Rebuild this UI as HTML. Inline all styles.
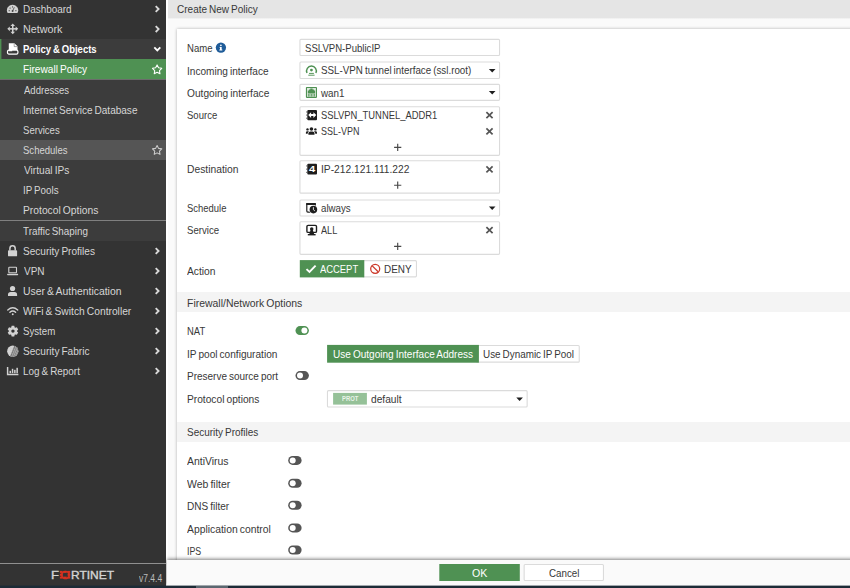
<!DOCTYPE html>
<html lang="en"><head><meta charset="utf-8"><title>Create New Policy</title>
<style>
html,body{margin:0;padding:0}
body{width:850px;height:588px;overflow:hidden;position:relative;background:#fafafa;font-family:"Liberation Sans",sans-serif;font-size:10.6px;color:#333}
.b{position:absolute;box-sizing:border-box}
.t{position:absolute;white-space:nowrap;line-height:1;transform-origin:0 0;display:block;word-spacing:-0.8px}
svg{position:absolute;overflow:visible}

</style></head>
<body>
<!-- main area -->
<div class="b" style="left:166px;top:0;width:2px;height:586px;background:#fff"></div>
<div class="b" style="left:168px;top:0;width:682px;height:19px;background:linear-gradient(#e5e5e5 0,#e5e5e5 18px,#efefef 18px,#f4f4f4 19px)"></div>
<div class="b" style="left:176.5px;top:29px;width:680px;height:540px;background:#fff;box-shadow:0 0 3px rgba(0,0,0,.3)"></div>
<div class="b" style="left:177px;top:292px;width:673px;height:20px;background:#f4f4f4"></div>
<div class="b" style="left:177px;top:422px;width:673px;height:20px;background:#f4f4f4"></div>
<svg width="850" height="588" viewBox="0 0 850 588" style="left:0;top:0">
<rect x="299.95" y="39.35" width="199.60" height="16.20" rx="1" fill="#fff" stroke="#dbdbdb" stroke-width="1.1"/>
<rect x="299.95" y="62.05" width="199.60" height="16.40" rx="1" fill="#fff" stroke="#dbdbdb" stroke-width="1.1"/>
<rect x="299.95" y="84.35" width="199.60" height="16.00" rx="1" fill="#fff" stroke="#dbdbdb" stroke-width="1.1"/>
<rect x="299.95" y="106.75" width="199.60" height="48.60" rx="1" fill="#fff" stroke="#dbdbdb" stroke-width="1.1"/>
<rect x="299.95" y="160.75" width="199.60" height="32.40" rx="1" fill="#fff" stroke="#dbdbdb" stroke-width="1.1"/>
<rect x="299.95" y="199.95" width="199.60" height="16.00" rx="1" fill="#fff" stroke="#dbdbdb" stroke-width="1.1"/>
<rect x="299.95" y="221.75" width="199.60" height="32.60" rx="1" fill="#fff" stroke="#dbdbdb" stroke-width="1.1"/>
<rect x="327.45" y="390.65" width="199.70" height="16.30" rx="1" fill="#fff" stroke="#dbdbdb" stroke-width="1.1"/>
<rect x="362.55" y="260.65" width="53.90" height="16.20" rx="1" fill="#fff" stroke="#dbdbdb" stroke-width="1.1"/>
<rect x="299.80" y="260.10" width="64.50" height="17.30" fill="#4f9153"/>
<rect x="476.55" y="345.45" width="102.70" height="16.70" rx="1" fill="#fff" stroke="#dbdbdb" stroke-width="1.1"/>
<rect x="327.10" y="344.90" width="151.80" height="17.80" fill="#4f9153"/>
<rect x="333.10" y="392.90" width="33.80" height="11.70" fill="#95c198"/>
</svg>
<!-- footer -->
<div class="b" style="left:167px;top:560px;width:690px;height:26px;background:#fafafa;box-shadow:0 -1px 3.5px rgba(0,0,0,.5)"></div>
<svg width="850" height="588" viewBox="0 0 850 588" style="left:0;top:0">
<rect x="439.30" y="564.00" width="80.50" height="17.00" fill="#4f9153"/>
<rect x="524.15" y="564.45" width="79.30" height="16.10" rx="1" fill="#fff" stroke="#dbdbdb" stroke-width="1.1"/>
</svg>
<!-- sidebar -->
<div class="b" style="left:0;top:0;width:166px;height:586px;background:#333"></div>
<div class="b" style="left:0;top:39px;width:166px;height:202px;background:#3c3c3c"></div>
<div class="b" style="left:0;top:39px;width:2px;height:20px;background:linear-gradient(90deg,#4f9153 0,#4f9153 1px,#445e45 1px)"></div>
<div class="b" style="left:0;top:59px;width:166px;height:20px;background:#4f9153"></div>
<div class="b" style="left:0;top:79px;width:166px;height:1px;background:#6c6c6c"></div>
<div class="b" style="left:0;top:140px;width:166px;height:20px;background:#555"></div>
<div class="b" style="left:0;top:220px;width:166px;height:1px;background:#808080"></div>
<div class="b" style="left:0;top:563px;width:166px;height:1px;background:#909090"></div>
<!-- taskbar strip -->
<div class="b" style="left:0;top:586px;width:850px;height:2px;background:#1c2b36"></div>
<div class="b" style="left:0;top:585px;width:850px;height:1px;background:#1c2b36;opacity:.4"></div>
<div class="b" style="left:196px;top:586px;width:32px;height:2px;background:#5b6770"></div>
<svg width="850" height="588" viewBox="0 0 850 588" style="left:0;top:0">
<path d="M7.65 13.1A5.65 5.65 0 1 1 17.45 13.1Z" fill="#d2d2d2"/>
<g fill="#444"><circle cx="9.2" cy="10.7" r=".6"/><circle cx="10.1" cy="8.1" r=".6"/><circle cx="12.55" cy="6.9" r=".6"/><circle cx="15.9" cy="10.7" r=".6"/><circle cx="12.6" cy="11" r=".95"/><path d="M12.6 11l1.7-3.7" stroke="#444" stroke-width=".8"/></g>
<g fill="#d2d2d2"><path d="M12.75 23.400000000000002l2.3 2.5h-4.6z"/><path d="M12.75 34.300000000000004l2.3-2.5h-4.6z"/><path d="M7.3 28.85l2.5-2.3v4.6z"/><path d="M18.2 28.85l-2.5-2.3v4.6z"/><rect x="12.0" y="25.450000000000003" width="1.5" height="6.8"/><rect x="9.35" y="28.1" width="6.8" height="1.5"/></g>
<rect x="7.5" y="50.2" width="10.4" height="3.9" rx="1.4" fill="#3c3c3c" stroke="#fff" stroke-width="1.2"/><path d="M8.8 43.2h5.6l3.1 3.1v3.6h-5.3v1.3H8.8z" fill="#fff"/><path d="M14.2 43.6v3h3" fill="none" stroke="#3c3c3c" stroke-width=".6" opacity=".75"/>
<rect x="8" y="250.2" width="9.1" height="6.1" rx=".9" fill="#d2d2d2"/><path d="M9.9 250.6v-2.2a2.65 2.65 0 0 1 5.3 0v2.2" fill="none" stroke="#d2d2d2" stroke-width="1.5"/>
<rect x="8.8" y="267.2" width="7.7" height="5.6" rx=".6" fill="none" stroke="#d2d2d2" stroke-width="1.1"/><rect x="7.1" y="273.7" width="11.1" height="1.5" rx=".7" fill="#d2d2d2"/>
<circle cx="12.55" cy="288.5" r="2.6" fill="#d2d2d2"/><path d="M8 296.1v-1.5a2.7 2.7 0 0 1 2.7-2.7h3.7a2.7 2.7 0 0 1 2.7 2.7v1.5z" fill="#d2d2d2"/>
<g fill="none" stroke="#d2d2d2" stroke-width="1.4" stroke-linecap="round"><path d="M7.8 310.1Q12.75 305.6 17.7 310.1"/><path d="M9.9 312.2Q12.75 309.7 15.6 312.2"/></g><circle cx="12.75" cy="314.2" r=".95" fill="#d2d2d2"/>
<path d="M11.65 325.81L14.25 325.81L14.70 327.39L15.29 327.73L16.89 327.33L18.18 329.58L17.04 330.76L17.04 331.44L18.18 332.62L16.89 334.87L15.29 334.47L14.70 334.81L14.25 336.39L11.65 336.39L11.20 334.81L10.61 334.47L9.01 334.87L7.72 332.62L8.86 331.44L8.86 330.76L7.72 329.58L9.01 327.33L10.61 327.73L11.20 327.39Z M11.25 331.1a1.7 1.7 0 1 0 3.4 0a1.7 1.7 0 1 0-3.4 0z" fill="#d2d2d2" fill-rule="evenodd"/>
<circle cx="12.75" cy="351.2" r="5.6" fill="#d2d2d2"/>
<clipPath id="sf"><circle cx="12.75" cy="351.2" r="5.6"/></clipPath><g clip-path="url(#sf)"><path d="M9.4 358L15 344H20V358z" fill="#777"/><path d="M11.2 358L16.8 344M13 358L18.6 344M14.8 358L20.4 344M16.6 358L22.2 344" stroke="#c4c4c4" stroke-width=".6" fill="none"/><path d="M10 350.2L20 354.2M10 352.6L20 356.6M10 347.8L20 351.8" stroke="#bdbdbd" stroke-width=".45" fill="none" opacity=".7"/></g>
<path d="M7.6 366.9v7.6h10.8" fill="none" stroke="#d2d2d2" stroke-width="1.45"/><g fill="#d2d2d2"><rect x="9.5" y="370.8" width="1.5" height="2.4"/><rect x="11.8" y="368.8" width="1.5" height="4.4"/><rect x="14.1" y="369.8" width="1.5" height="3.4"/><rect x="16.4" y="367.8" width="1.5" height="5.4"/></g>
<path d="M155.7 6.10l2.9 2.9-2.9 2.9" fill="none" stroke="#d8d8d8" stroke-width="1.85"/>
<path d="M155.7 26.20l2.9 2.9-2.9 2.9" fill="none" stroke="#d8d8d8" stroke-width="1.85"/>
<path d="M155.7 248.10l2.9 2.9-2.9 2.9" fill="none" stroke="#d8d8d8" stroke-width="1.85"/>
<path d="M155.7 268.10l2.9 2.9-2.9 2.9" fill="none" stroke="#d8d8d8" stroke-width="1.85"/>
<path d="M155.7 288.10l2.9 2.9-2.9 2.9" fill="none" stroke="#d8d8d8" stroke-width="1.85"/>
<path d="M155.7 308.10l2.9 2.9-2.9 2.9" fill="none" stroke="#d8d8d8" stroke-width="1.85"/>
<path d="M155.7 328.10l2.9 2.9-2.9 2.9" fill="none" stroke="#d8d8d8" stroke-width="1.85"/>
<path d="M155.7 348.10l2.9 2.9-2.9 2.9" fill="none" stroke="#d8d8d8" stroke-width="1.85"/>
<path d="M155.7 368.10l2.9 2.9-2.9 2.9" fill="none" stroke="#d8d8d8" stroke-width="1.85"/>
<path d="M154.3 47.4l3 3 3-3" fill="none" stroke="#fff" stroke-width="1.85"/>
<path d="M157.10 64.90L158.57 67.78L161.76 68.29L159.48 70.57L159.98 73.76L157.10 72.30L154.22 73.76L154.72 70.57L152.44 68.29L155.63 67.78Z" fill="none" stroke="#fff" stroke-width="1.05" stroke-linejoin="round"/>
<path d="M157.10 145.50L158.57 148.38L161.76 148.89L159.48 151.17L159.98 154.36L157.10 152.90L154.22 154.36L154.72 151.17L152.44 148.89L155.63 148.38Z" fill="none" stroke="#ccc" stroke-width="1.05" stroke-linejoin="round"/>
<g font-family="'Liberation Sans',sans-serif" font-weight="400" font-size="10.6" fill="#d4d4d4" stroke="#d4d4d4" stroke-width=".35"><text x="51.1" y="578.6" textLength="8" lengthAdjust="spacingAndGlyphs">F</text><text x="60.2" y="578.6" textLength="9.8" lengthAdjust="spacingAndGlyphs" fill="#d8311f" stroke="#d8311f">O</text><text x="71" y="578.6" textLength="43" lengthAdjust="spacingAndGlyphs">RTINET</text></g>
<g fill="#d8311f"><rect x="59.9" y="570.9" width="2.6" height="2"/><rect x="63.4" y="570.9" width="3.3" height="2"/><rect x="67.6" y="570.9" width="2.6" height="2"/><rect x="59.9" y="573.7" width="2.6" height="2.1"/><rect x="67.6" y="573.7" width="2.6" height="2.1"/><rect x="59.9" y="576.6" width="2.6" height="2"/><rect x="63.4" y="576.6" width="3.3" height="2"/><rect x="67.6" y="576.6" width="2.6" height="2"/></g>
<circle cx="220.9" cy="47.6" r="5.15" fill="#1f5c99"/><g fill="#fff"><circle cx="220.9" cy="45.3" r=".85"/><path d="M219.8 46.9h1.9v2.7h.6v.9h-3v-.9h.7v-1.8h-.7z"/></g>
<path d="M307.0 73.0A4.9 4.9 0 1 1 315.9 73.0" fill="none" stroke="#4f9153" stroke-width="1.45"/><circle cx="311.45" cy="70.1" r="1.4" fill="#4f9153"/><path d="M309 73.4h4.9M308.3 75.2h6.3" stroke="#4f9153" stroke-width=".95"/>
<rect x="305.9" y="86.9" width="11.1" height="11" rx=".8" fill="#4f9153"/><rect x="307" y="88" width="8.9" height="8.8" fill="#dfeadf"/><path d="M307.8 93.5v-3.1h1.2v-1h1.3v-.8h2.3v.8h1.3v1h1.2v3.1z" fill="#4f9153"/><path d="M308.4 94v2.6M309.9 94v2.6M311.45 94v2.6M313 94v2.6M314.5 94v2.6" stroke="#4f9153" stroke-width=".8"/>
<rect x="307.3" y="109.9" width="9.7" height="10.40" rx="1" fill="#1e1e1e"/>
<rect x="306.2" y="111.43" width="1.7" height="1.1" fill="#555"/>
<rect x="306.2" y="114.55" width="1.7" height="1.1" fill="#555"/>
<rect x="306.2" y="117.67" width="1.7" height="1.1" fill="#555"/>
<path d="M308.2 115.1l2.9-2.9v1.9h2.3v-1.9l2.9 2.9-2.9 2.9v-1.9h-2.3v1.9z" fill="#fff"/>
<g fill="#1e1e1e"><circle cx="311.45" cy="129" r="1.8"/><path d="M308.4 134.7v-1.2a2.1 2.1 0 0 1 2.1-2.1h1.9a2.1 2.1 0 0 1 2.1 2.1v1.2z"/><circle cx="307.5" cy="129.4" r="1.2"/><circle cx="315.4" cy="129.4" r="1.2"/><path d="M305.9 133.7v-1.1a1.4 1.4 0 0 1 1.4-1.4h.9a1.3 1.3 0 0 1 .7.2a3 3 0 0 0-1.3 2.3z"/><path d="M317 133.7v-1.1a1.4 1.4 0 0 0-1.4-1.4h-.9a1.3 1.3 0 0 0-.7.2a3 3 0 0 1 1.3 2.3z"/></g>
<rect x="307.3" y="163.8" width="9.7" height="10.70" rx="1" fill="#1e1e1e"/>
<rect x="306.2" y="165.39" width="1.7" height="1.1" fill="#555"/>
<rect x="306.2" y="168.60" width="1.7" height="1.1" fill="#555"/>
<rect x="306.2" y="171.81" width="1.7" height="1.1" fill="#555"/>
<text x="309.0" y="172.4" font-family="'Liberation Sans',sans-serif" font-weight="700" font-size="9.4" fill="#fff" textLength="6.2" lengthAdjust="spacingAndGlyphs">4</text>
<path d="M311 212.1h-3.2a1 1 0 0 1-1-1v-7.3h8.4v2" fill="none" stroke="#1e1e1e" stroke-width="1.2"/><rect x="306.2" y="202.9" width="9.6" height="2.1" rx=".6" fill="#1e1e1e"/><circle cx="313.4" cy="209.6" r="4.4" fill="#fff"/><circle cx="313.4" cy="209.6" r="3.8" fill="#1e1e1e"/><path d="M313.4 207.2v2.5l1.5 1.2" fill="none" stroke="#fff" stroke-width=".85"/>
<rect x="306.9" y="225.4" width="9.6" height="7" rx="1.2" fill="none" stroke="#1e1e1e" stroke-width="1.4"/><circle cx="311.7" cy="228.9" r="1.75" fill="#1e1e1e"/><path d="M310.7 229.8l-1.5 4.4h5l-1.5-4.4z" fill="#1e1e1e"/><path d="M307.8 234.7h7.8" stroke="#1e1e1e" stroke-width="1.4"/>
<path d="M488.9 69.0h6.6l-3.3 3.5z" fill="#1e1e1e"/>
<path d="M488.9 90.9h6.6l-3.3 3.5z" fill="#1e1e1e"/>
<path d="M488.9 206.6h6.6l-3.3 3.5z" fill="#1e1e1e"/>
<path d="M516.3000000000001 397.4h6.6l-3.3 3.5z" fill="#1e1e1e"/>
<path d="M486.4 112.2l6.2 6M492.6 112.2l-6.2 6" stroke="#555" stroke-width="1.7" fill="none"/>
<path d="M486.4 128.3l6.2 6M492.6 128.3l-6.2 6" stroke="#555" stroke-width="1.7" fill="none"/>
<path d="M486.4 166.4l6.2 6M492.6 166.4l-6.2 6" stroke="#555" stroke-width="1.7" fill="none"/>
<path d="M486.4 227.2l6.2 6M492.6 227.2l-6.2 6" stroke="#555" stroke-width="1.7" fill="none"/>
<path d="M394.1 147.3h7.2M397.7 143.70v7.2" stroke="#484848" stroke-width="1.15" fill="none"/>
<path d="M394.1 185.2h7.2M397.7 181.60v7.2" stroke="#484848" stroke-width="1.15" fill="none"/>
<path d="M394.1 246.4h7.2M397.7 242.80v7.2" stroke="#484848" stroke-width="1.15" fill="none"/>
<path d="M306.5 269.1l3 2.9 6.1-6.3" fill="none" stroke="#fff" stroke-width="1.9"/>
<circle cx="375.2" cy="268.8" r="4.5" fill="none" stroke="#cc3a2b" stroke-width="1.3"/><path d="M372 265.6l6.4 6.4" stroke="#cc3a2b" stroke-width="1.3"/>
<rect x="295.5" y="326.10" width="13.4" height="9.0" rx="4.5" fill="#4f9153"/>
<circle cx="304.40" cy="330.6" r="3" fill="#fff"/>
<rect x="295.5" y="371.10" width="13.4" height="9.0" rx="4.5" fill="#555"/>
<circle cx="300.00" cy="375.6" r="3" fill="#fff"/>
<rect x="288.2" y="455.90" width="13.4" height="9.0" rx="4.5" fill="#555"/>
<circle cx="292.70" cy="460.4" r="3" fill="#fff"/>
<rect x="288.2" y="478.70" width="13.4" height="9.0" rx="4.5" fill="#555"/>
<circle cx="292.70" cy="483.2" r="3" fill="#fff"/>
<rect x="288.2" y="500.80" width="13.4" height="9.0" rx="4.5" fill="#555"/>
<circle cx="292.70" cy="505.3" r="3" fill="#fff"/>
<rect x="288.2" y="523.40" width="13.4" height="9.0" rx="4.5" fill="#555"/>
<circle cx="292.70" cy="527.9" r="3" fill="#fff"/>
<rect x="288.2" y="545.50" width="13.4" height="9.0" rx="4.5" fill="#555"/>
<circle cx="292.70" cy="550.0" r="3" fill="#fff"/>
</svg>
<nav aria-label="Main menu">
<span class="t" style="left:23.30px;top:4.00px;font-size:10.6px;color:#d6d6d6;transform:scaleX(0.9386)">Dashboard</span>
<span class="t" style="left:23.30px;top:24.00px;font-size:10.6px;color:#d6d6d6;transform:scaleX(1.0132)">Network</span>
<span class="t" style="left:23.49px;top:44.00px;font-size:10.6px;color:#fff;transform:scaleX(0.8979);font-weight:700">Policy &amp; Objects</span>
<span class="t" style="left:23.29px;top:64.00px;font-size:10.6px;color:#fff;transform:scaleX(0.9570)">Firewall Policy</span>
<span class="t" style="left:23.52px;top:85.00px;font-size:10.6px;color:#d6d6d6;transform:scaleX(0.9000)">Addresses</span>
<span class="t" style="left:23.21px;top:105.00px;font-size:10.6px;color:#d6d6d6;transform:scaleX(0.9468)">Internet Service Database</span>
<span class="t" style="left:23.09px;top:125.00px;font-size:10.6px;color:#d6d6d6;transform:scaleX(0.9037)">Services</span>
<span class="t" style="left:23.09px;top:145.00px;font-size:10.6px;color:#d6d6d6;transform:scaleX(0.9007)">Schedules</span>
<span class="t" style="left:23.60px;top:165.00px;font-size:10.6px;color:#d6d6d6;transform:scaleX(0.9584)">Virtual IPs</span>
<span class="t" style="left:23.23px;top:185.00px;font-size:10.6px;color:#d6d6d6;transform:scaleX(0.9236)">IP Pools</span>
<span class="t" style="left:23.31px;top:205.00px;font-size:10.6px;color:#d6d6d6;transform:scaleX(0.9716)">Protocol Options</span>
<span class="t" style="left:23.05px;top:226.00px;font-size:10.6px;color:#d6d6d6;transform:scaleX(0.9296)">Traffic Shaping</span>
<span class="t" style="left:23.38px;top:246.00px;font-size:10.6px;color:#d6d6d6;transform:scaleX(0.9498)">Security Profiles</span>
<span class="t" style="left:23.86px;top:266.00px;font-size:10.6px;color:#d6d6d6;transform:scaleX(0.9438)">VPN</span>
<span class="t" style="left:23.33px;top:286.00px;font-size:10.6px;color:#d6d6d6;transform:scaleX(0.9819)">User &amp; Authentication</span>
<span class="t" style="left:23.11px;top:306.00px;font-size:10.6px;color:#d6d6d6;transform:scaleX(0.9686)">WiFi &amp; Switch Controller</span>
<span class="t" style="left:23.09px;top:326.00px;font-size:10.6px;color:#d6d6d6;transform:scaleX(0.9126)">System</span>
<span class="t" style="left:23.44px;top:346.00px;font-size:10.6px;color:#d6d6d6;transform:scaleX(0.9517)">Security Fabric</span>
<span class="t" style="left:23.28px;top:366.00px;font-size:10.6px;color:#d6d6d6;transform:scaleX(0.9355)">Log &amp; Report</span>
<span class="t" style="left:139.30px;top:573.00px;font-size:10.6px;color:#bbb;transform:scaleX(0.8009)">v7.4.4</span>
</nav>
<header>
<span class="t" style="left:176.69px;top:4.00px;font-size:10.6px;color:#383838;transform:scaleX(0.9448)">Create New Policy</span>
</header>
<main>
<span class="t" style="left:187.00px;top:43.00px;font-size:10.6px;color:#383838;transform:scaleX(0.9025)">Name</span>
<span class="t" style="left:186.76px;top:66.00px;font-size:10.6px;color:#383838;transform:scaleX(0.9518)">Incoming interface</span>
<span class="t" style="left:186.55px;top:88.00px;font-size:10.6px;color:#383838;transform:scaleX(0.9600)">Outgoing interface</span>
<span class="t" style="left:186.68px;top:110.00px;font-size:10.6px;color:#383838;transform:scaleX(0.8994)">Source</span>
<span class="t" style="left:186.78px;top:164.00px;font-size:10.6px;color:#383838;transform:scaleX(0.9714)">Destination</span>
<span class="t" style="left:186.68px;top:203.00px;font-size:10.6px;color:#383838;transform:scaleX(0.8917)">Schedule</span>
<span class="t" style="left:186.81px;top:225.00px;font-size:10.6px;color:#383838;transform:scaleX(0.9078)">Service</span>
<span class="t" style="left:187.15px;top:266.00px;font-size:10.6px;color:#383838;transform:scaleX(0.9693)">Action</span>
<span class="t" style="left:186.65px;top:298.00px;font-size:10.6px;color:#383838;transform:scaleX(0.9862)">Firewall/Network Options</span>
<span class="t" style="left:186.67px;top:326.00px;font-size:10.6px;color:#383838;transform:scaleX(0.8892)">NAT</span>
<span class="t" style="left:186.76px;top:349.00px;font-size:10.6px;color:#383838;transform:scaleX(0.9534)">IP pool configuration</span>
<span class="t" style="left:186.61px;top:371.00px;font-size:10.6px;color:#383838;transform:scaleX(0.9420)">Preserve source port</span>
<span class="t" style="left:186.55px;top:394.00px;font-size:10.6px;color:#383838;transform:scaleX(0.9625)">Protocol options</span>
<span class="t" style="left:186.62px;top:427.00px;font-size:10.6px;color:#383838;transform:scaleX(0.9413)">Security Profiles</span>
<span class="t" style="left:186.54px;top:456.00px;font-size:10.6px;color:#383838;transform:scaleX(0.9849)">AntiVirus</span>
<span class="t" style="left:186.73px;top:479.00px;font-size:10.6px;color:#383838;transform:scaleX(0.9873)">Web filter</span>
<span class="t" style="left:186.83px;top:501.00px;font-size:10.6px;color:#383838;transform:scaleX(0.9465)">DNS filter</span>
<span class="t" style="left:186.72px;top:524.00px;font-size:10.6px;color:#383838;transform:scaleX(0.9773)">Application control</span>
<span class="t" style="left:186.68px;top:546.00px;font-size:10.6px;color:#383838;transform:scaleX(0.8318)">IPS</span>
<span class="t" style="left:304.82px;top:43.00px;font-size:10.6px;color:#383838;transform:scaleX(0.9046)">SSLVPN-PublicIP</span>
<span class="t" style="left:320.88px;top:65.00px;font-size:10.6px;color:#383838;transform:scaleX(0.9252)">SSL-VPN tunnel interface (ssl.root)</span>
<span class="t" style="left:321.08px;top:88.00px;font-size:10.6px;color:#383838;transform:scaleX(0.9287)">wan1</span>
<span class="t" style="left:320.99px;top:110.00px;font-size:10.6px;color:#383838;transform:scaleX(0.8868)">SSLVPN_TUNNEL_ADDR1</span>
<span class="t" style="left:321.10px;top:126.00px;font-size:10.6px;color:#383838;transform:scaleX(0.8482)">SSL-VPN</span>
<span class="t" style="left:320.78px;top:164.00px;font-size:10.6px;color:#383838;transform:scaleX(0.9666)">IP-212.121.111.222</span>
<span class="t" style="left:320.84px;top:203.00px;font-size:10.6px;color:#383838;transform:scaleX(0.9181)">always</span>
<span class="t" style="left:321.06px;top:225.00px;font-size:10.6px;color:#383838;transform:scaleX(0.8635)">ALL</span>
<span class="t" style="left:320.48px;top:264.00px;font-size:10.6px;color:#fff;transform:scaleX(0.8875)">ACCEPT</span>
<span class="t" style="left:384.05px;top:264.00px;font-size:10.6px;color:#383838;transform:scaleX(0.9352)">DENY</span>
<span class="t" style="left:332.52px;top:349.00px;font-size:10.6px;color:#fff;transform:scaleX(0.9477)">Use Outgoing Interface Address</span>
<span class="t" style="left:483.34px;top:349.00px;font-size:10.6px;color:#383838;transform:scaleX(0.9332)">Use Dynamic IP Pool</span>
<span class="t" style="left:341.70px;top:395.21px;font-size:7.2px;color:#e8f3e8;transform:scaleX(0.8214);font-weight:700">PROT</span>
<span class="t" style="left:370.70px;top:394.00px;font-size:10.6px;color:#383838;transform:scaleX(0.9635)">default</span>
</main>
<footer>
<span class="t" style="left:471.94px;top:568.00px;font-size:10.6px;color:#fff;transform:scaleX(1.0043)">OK</span>
<span class="t" style="left:548.87px;top:568.00px;font-size:10.6px;color:#383838;transform:scaleX(0.9246)">Cancel</span>
</footer>
</body></html>
